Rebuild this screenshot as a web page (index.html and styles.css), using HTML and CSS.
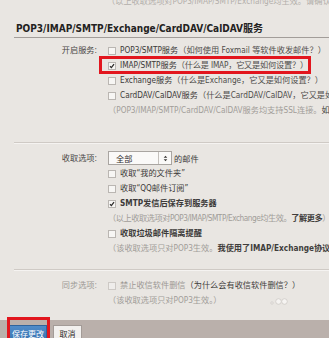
FILE: index.html
```html
<!DOCTYPE html>
<html lang="zh-CN">
<head>
<meta charset="utf-8">
<title>POP3/IMAP/SMTP 服务设置</title>
<link rel="stylesheet" href="styles.css">
</head>
<body>
<div class="page">
  <div class="topnote"><span>（以上收取选项对POP3/IMAP/SMTP/Exchange均生效。请确认您的帐号已开启相关服务设置。如何设置？）</span></div>
  <h2 class="title">POP3/IMAP/SMTP/Exchange/CardDAV/CalDAV服务</h2>

  <div class="section sep">
    <div class="label">开启服务:</div>
    <div class="opts">
      <div class="row"><span class="cb"></span>POP3/SMTP服务 <span class="help">（如何使用 Foxmail 等软件收发邮件？）</span></div>
      <div class="row marked"><span class="cb on"><svg viewBox="0 0 6 6"><path d="M1 3.2 L2.4 4.6 L5 1.2" /></svg></span>IMAP/SMTP服务 <span class="help snug">（什么是 IMAP，它又是如何设置？）</span></div>
      <div class="row"><span class="cb"></span>Exchange服务<span class="help">（什么是Exchange，它又是如何设置？）</span></div>
      <div class="row"><span class="cb"></span>CardDAV/CalDAV服务<span class="help">（什么是CardDAV/CalDAV，它又是如何设置？）</span></div>
      <div class="row note">（POP3/IMAP/SMTP/CardDAV/CalDAV服务均支持SSL连接。<span class="dark">如何设置？</span>）</div>
    </div>
  </div>

  <div class="section sep s2">
    <div class="label sel-label">收取选项:</div>
    <div class="opts">
      <div class="selrow">
        <span class="select"><span class="sel-text">全部</span><span class="sel-arrow"><svg viewBox="0 0 7 9"><path d="M3.5 0.5 L6 3.5 H1 Z M3.5 8.5 L6 5.5 H1 Z" /></svg></span></span>
        <span>的邮件</span>
      </div>
      <div class="row"><span class="cb"></span>收取“我的文件夹”</div>
      <div class="row"><span class="cb"></span>收取“QQ邮件订阅”</div>
      <div class="row strong"><span class="cb on"><svg viewBox="0 0 6 6"><path d="M1 3.2 L2.4 4.6 L5 1.2" /></svg></span>SMTP发信后保存到服务器</div>
      <div class="row note tight">（以上收取选项对POP3/IMAP/SMTP/Exchange均生效。<span class="dark strong">了解更多</span>）</div>
      <div class="row strong"><span class="cb"></span>收取垃圾邮件隔离提醒</div>
      <div class="row note">（该收取选项只对POP3生效。<span class="dark strong">我使用了IMAP/Exchange协议，怎么收取垃圾邮件？</span>）</div>
    </div>
  </div>

  <div class="section s3">
    <div class="label muted">同步选项:</div>
    <div class="opts">
      <div class="row muted"><span class="cb off"></span>禁止收信软件删信 <span class="dark">（为什么会有收信软件删信？）</span></div>
      <div class="row note">（该收取选项只对POP3生效。）<svg class="dots" viewBox="0 0 20 8"><circle cx="2" cy="6" r="1.2"/><circle cx="8.5" cy="4.5" r="2.8"/><circle cx="14.5" cy="4.5" r="2.8"/></svg></div>
    </div>
  </div>
</div>

<div class="footer">
  <button class="btn primary">保存更改</button>
  <button class="btn">取消</button>
  <span class="mark"></span>
</div>
</body>
</html>
```

FILE: styles.css
```css
html, body {
  margin: 0;
  padding: 0;
}

body {
  width: 329px;
  height: 338px;
  overflow: hidden;
  background: #e9e6e2;
  font-family: "DejaVu Sans Condensed", "DejaVu Sans", "Noto Sans CJK SC", sans-serif;
  font-stretch: condensed;
  font-size: 8.2px;
  color: #3c3a39;
  display: flex;
  flex-direction: column;
}

.page {
  flex: 1;
  padding-left: 14px;
  white-space: nowrap;
  overflow: hidden;
}

.topnote {
  height: 7px;
  overflow: hidden;
  padding-left: 93px;
  color: #b3afab;
  line-height: 9px;
}

.topnote span {
  display: block;
  margin-top: -3px;
}

.title {
  margin: 15px 0 0 0;
  padding: 0 0 2px 2px;
  font-size: 10px;
  font-weight: bold;
  color: #232221;
  line-height: 13px;
  border-bottom: 1px solid #a29d99;
}

.section {
  display: flex;
  padding-top: 5px;
  padding-bottom: 24px;
}

.sep {
  border-bottom: 1px solid #cfcac5;
  box-shadow: 0 1px 0 #f5f3f1;
}

.s2 {
  padding-top: 7px;
  padding-bottom: 13px;
}

.s3 {
  padding-top: 8px;
  padding-bottom: 0;
}

.label {
  width: 83px;
  flex: none;
  text-align: right;
  line-height: 15px;
  color: #4a4846;
}

.sel-label {
  line-height: 16px;
}

.opts {
  padding-left: 11px;
  display: flex;
  flex-direction: column;
}

.row {
  height: 15px;
  line-height: 15px;
  display: flex;
  align-items: center;
  position: relative;
}

.tight {
  letter-spacing: -0.45px;
}

.snug {
  letter-spacing: -0.2px;
}

.help {
  color: #4f4d4b;
}

.note {
  color: #a19d99;
}

.dark {
  color: #3f3d3b;
}

.strong {
  font-weight: bold;
}

.muted {
  color: #9c9894;
}

.cb {
  width: 6px;
  height: 6px;
  flex: none;
  border: 1px solid #bab6b2;
  background: #f7f6f4;
  margin-right: 4px;
  display: flex;
}

.cb.off {
  border-color: #cdc9c5;
  background: #efedeb;
}

.cb svg {
  width: 6px;
  height: 6px;
  fill: none;
  stroke: #2d2b2a;
  stroke-width: 1.3;
}

.marked::after {
  content: "";
  position: absolute;
  left: -9px;
  top: -2px;
  width: 212px;
  height: 18px;
  box-sizing: border-box;
  border: 3px solid #e2161e;
}

.selrow {
  height: 16px;
  display: flex;
  align-items: center;
  gap: 2px;
}

.select {
  width: 64px;
  height: 14px;
  box-sizing: border-box;
  border: 1px solid #a9a5a1;
  background: #faf9f8;
  display: flex;
  align-items: center;
  justify-content: space-between;
}

.sel-text {
  padding-left: 7px;
  color: #2e2c2b;
}

.sel-arrow {
  width: 12px;
  height: 12px;
  border-left: 1px solid #c4c0bc;
  display: flex;
  align-items: center;
  justify-content: center;
}

.sel-arrow svg {
  width: 5px;
  height: 7px;
  fill: #3a3836;
}

.dots {
  width: 20px;
  height: 8px;
  margin-left: 48px;
  fill: #f6f4f2;
  stroke: #cdc9c5;
  stroke-width: 0.8;
}

.footer {
  height: 18px;
  flex: none;
  background: #bab0ab;
  padding: 5px 0 0 9px;
  box-sizing: border-box;
  display: flex;
  gap: 6px;
  position: relative;
}

.btn {
  height: 16px;
  padding: 0;
  font-family: "Noto Sans CJK SC", sans-serif;
  font-size: 8px;
  border: 1px solid #a39b97;
  background: #f2f0ee;
  color: #2e2c2b;
  width: 29px;
  line-height: 13px;
}

.btn.primary {
  width: 38px;
  border-color: #2f649c;
  background: linear-gradient(#4f8cc9, #3a74b1);
  color: #ffffff;
}

.mark {
  position: absolute;
  left: 7px;
  top: -3px;
  width: 43px;
  height: 26px;
  box-sizing: border-box;
  border: 3px solid #e2161e;
}
```
